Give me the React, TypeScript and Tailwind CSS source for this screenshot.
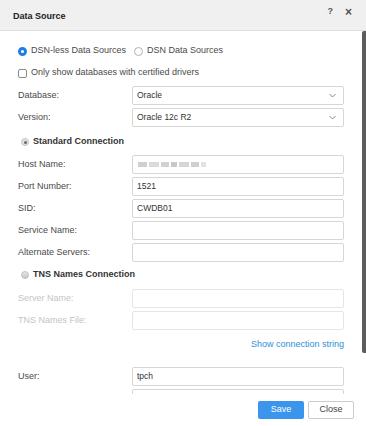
import React from "react";

function Input({ value, disabled, children }: { value?: string; disabled?: boolean; children?: React.ReactNode }) {
  return (
    <div
      className={`w-[212px] h-[19px] rounded-[2px] border bg-white flex items-center pl-[4px] text-[8.5px] text-[#333] ${
        disabled ? "border-[#e6e6e6]" : "border-[#d6d6d6]"
      }`}
    >
      {value}
      {children}
    </div>
  );
}

function Row({ label, disabled, mt, children }: { label: string; disabled?: boolean; mt: string; children: React.ReactNode }) {
  return (
    <div className={`flex items-center ${mt}`}>
      <div className={`w-[114px] ${disabled ? "text-[#c4c4c4]" : "text-[#4a4a4a]"}`}>{label}</div>
      {children}
    </div>
  );
}

function Select({ value }: { value: string }) {
  return (
    <div className="w-[212px] h-[19px] rounded-[2px] border border-[#d6d6d6] bg-white flex items-center justify-between pl-[4px] pr-[7px] text-[8.5px] text-[#333]">
      <span>{value}</span>
      <svg width="7" height="5" viewBox="0 0 7 5">
        <polyline points="0.5,1 3.5,4 6.5,1" fill="none" stroke="#888" strokeWidth="1" />
      </svg>
    </div>
  );
}

export default function App() {
  return (
    <div className="w-[366px] h-[426px] bg-white flex flex-col font-['Liberation_Sans',Arial,sans-serif] text-[9px] text-[#333] overflow-hidden">
      {/* Header */}
      <div className="h-[31px] shrink-0 bg-[#f0f0f0] border-b border-[#dddddd] flex items-start pl-[13px] pr-[14px]">
        <div className="font-bold text-[#222] mt-[10px]">Data Source</div>
        <div className="ml-auto flex items-center gap-[12px] mt-[5px] text-[#555]">
          <span className="text-[9px] font-bold">?</span>
          <span className="text-[12px] font-bold leading-none">×</span>
        </div>
      </div>

      {/* Body */}
      <div className="relative flex-1 overflow-hidden">
        <div className="absolute right-0 top-0 w-[4px] h-[322px] rounded-l-[2px] bg-[#5c5c5c]" />
        <div className="pl-[18px] pr-[22px] pt-[13px] flex flex-col">
          {/* Radio row */}
          <div className="h-[14px] flex items-center">
            <span className="w-[9px] h-[9px] rounded-full border-[3px] border-[#1c7fe3] bg-white" />
            <span className="ml-[4px] text-[#4a4a4a]">DSN-less Data Sources</span>
            <span className="ml-[8px] w-[9px] h-[9px] rounded-full border border-[#b0b0b0] bg-white" />
            <span className="ml-[4px] text-[#4a4a4a]">DSN Data Sources</span>
          </div>
          {/* Checkbox */}
          <div className="h-[14px] mt-[8px] flex items-center">
            <span className="w-[9px] h-[9px] rounded-[2px] border border-[#8a8a8a] bg-white" />
            <span className="ml-[4px] text-[#4a4a4a]">Only show databases with certified drivers</span>
          </div>

          <Row label="Database:" mt="mt-[6px]">
            <Select value="Oracle" />
          </Row>
          <Row label="Version:" mt="mt-[3px]">
            <Select value="Oracle 12c R2" />
          </Row>

          <div className="h-[14px] mt-[8px] flex items-center pl-[3px]">
            <span className="w-[8px] h-[8px] rounded-full border border-[#c4c4c4] bg-[#e2e2e2] flex items-center justify-center">
              <span className="w-[3px] h-[3px] rounded-full bg-[#6a6a6a]" />
            </span>
            <span className="ml-[4px] font-bold text-[#333]">Standard Connection</span>
          </div>

          <Row label="Host Name:" mt="mt-[6px]">
            <Input>
              <div className="flex items-center gap-[2px] ml-[1px] blur-[0.6px]">
                <span className="w-[9px] h-[5px] bg-[#cfcfcf]" />
                <span className="w-[10px] h-[5px] bg-[#dadada]" />
                <span className="w-[8px] h-[5px] bg-[#d2d2d2]" />
                <span className="w-[6px] h-[5px] bg-[#c8c8c8]" />
                <span className="w-[10px] h-[5px] bg-[#d6d6d6]" />
                <span className="w-[8px] h-[5px] bg-[#cfcfcf]" />
                <span className="w-[5px] h-[5px] bg-[#e2e2e2]" />
              </div>
            </Input>
          </Row>
          <Row label="Port Number:" mt="mt-[3px]">
            <Input value="1521" />
          </Row>
          <Row label="SID:" mt="mt-[3px]">
            <Input value="CWDB01" />
          </Row>
          <Row label="Service Name:" mt="mt-[3px]">
            <Input />
          </Row>
          <Row label="Alternate Servers:" mt="mt-[3px]">
            <Input />
          </Row>

          <div className="h-[14px] mt-[6px] flex items-center pl-[3px]">
            <span className="w-[8px] h-[8px] rounded-full border border-[#c0c0c0] bg-gradient-to-b from-[#e6e6e6] to-[#c6c6c6]" />
            <span className="ml-[4px] font-bold text-[#333]">TNS Names Connection</span>
          </div>

          <Row label="Server Name:" disabled mt="mt-[7px]">
            <Input disabled />
          </Row>
          <Row label="TNS Names File:" disabled mt="mt-[3px]">
            <Input disabled />
          </Row>

          <div className="h-[14px] mt-[8px] flex items-center justify-end text-[#2d8fd6]">
            Show connection string
          </div>

          <Row label="User:" mt="mt-[15px]">
            <Input value="tpch" />
          </Row>
          <Row label="Password:" mt="mt-[3px]">
            <Input />
          </Row>
        </div>
      </div>

      {/* Footer */}
      <div className="h-[32px] shrink-0 bg-white flex items-center justify-end gap-[4px] pr-[12px]">
        <button className="w-[46px] h-[18px] rounded-[2px] bg-[#3c95ec] text-white text-[9px]">Save</button>
        <button className="w-[46px] h-[18px] rounded-[2px] border border-[#cccccc] bg-white text-[#444] text-[9px]">Close</button>
      </div>
    </div>
  );
}
